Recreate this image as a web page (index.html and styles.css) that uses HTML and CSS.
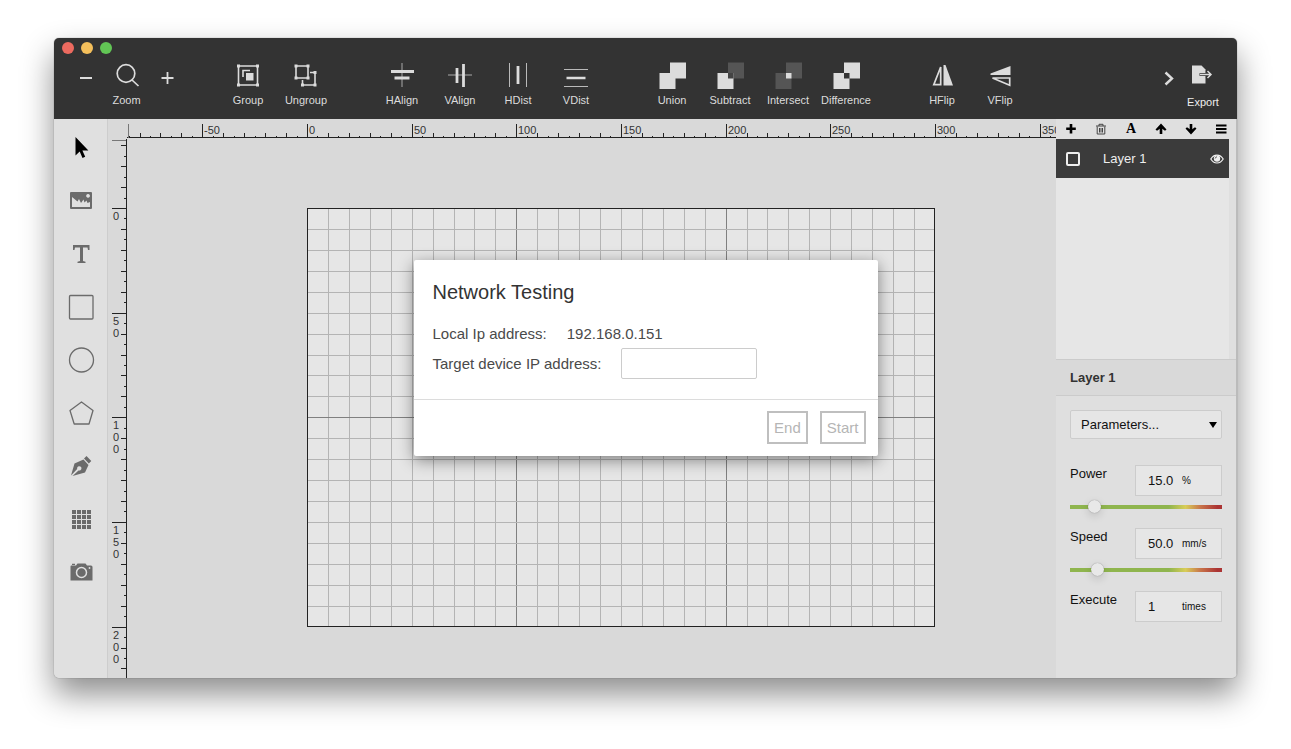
FILE: index.html
```html
<!DOCTYPE html>
<html lang="en">

<head>
    <meta charset="UTF-8">
    <meta name="viewport" content="width=device-width, initial-scale=1.0">
    <title>Network Testing</title>
    <link rel="stylesheet" href="styles.css">
</head>

<body>
    <div class="window">
        <header class="topbar">
            <div class="lights">
                <span class="light red"></span>
                <span class="light yellow"></span>
                <span class="light green"></span>
            </div>
            <div class="tools">
                <div class="tool-group">
                    <button class="tool step" aria-label="Zoom out"><svg viewBox="0 0 28 28"><path d="M8 17h12" stroke="currentColor" stroke-width="2"/></svg></button>
                    <button class="tool zoom"><svg viewBox="0 0 28 28" fill="none" stroke="currentColor" stroke-width="1.7"><circle cx="13" cy="12.500" r="8.800"/><path d="M19 19l6.500 6"/></svg>Zoom</button>
                    <button class="tool step" aria-label="Zoom in"><svg viewBox="0 0 28 28"><path d="M8.500 17h12M14.500 11v12" stroke="currentColor" stroke-width="1.800"/></svg></button>
                </div>
                <div class="tool-group">
                    <button class="tool"><svg viewBox="0 0 28 28"><path d="M4.500 5h19v19h-19z" fill="none" stroke="currentColor" stroke-width="1.600"/><path d="M3 3.500h3v3H3zM22 3.500h3v3h-3zM3 22.500h3v3H3zM22 22.500h3v3h-3zM12 12h7.500v7.500H12z" fill="currentColor"/><path d="M9 16V9.500h7" fill="none" stroke="currentColor" stroke-width="1.600"/></svg>Group</button>
                    <button class="tool"><svg viewBox="0 0 28 28"><path d="M4 5h12v12H4zM18 11.500h5V24H10.500v-5" fill="none" stroke="currentColor" stroke-width="1.600"/><path d="M2.500 3.500h3v3h-3zM14.500 3.500h3v3h-3zM2.500 15.500h3v3h-3zM14.500 15.500h3v3h-3zM21.500 10h3v3h-3zM21.500 22.500h3v3h-3zM9 22.500h3v3H9z" fill="currentColor"/></svg>Ungroup</button>
                </div>
                <div class="tool-group">
                    <button class="tool"><svg viewBox="0 0 28 28" stroke="currentColor"><path d="M14 2v24" stroke-opacity=".7"/><path d="M3 10.500h23M6.500 17h15" stroke-width="2.800"/></svg>HAlign</button>
                    <button class="tool"><svg viewBox="0 0 28 28" stroke="currentColor"><path d="M2 14h24" stroke-opacity=".7"/><path d="M11 7v15M17.500 3v23" stroke-width="2.800"/></svg>VAlign</button>
                    <button class="tool"><svg viewBox="0 0 28 28" stroke="currentColor"><path d="M5.500 2v24M22.500 2v24" stroke-opacity=".8"/><path d="M14 5v18" stroke-width="2.800"/></svg>HDist</button>
                    <button class="tool"><svg viewBox="0 0 28 28" stroke="currentColor"><path d="M2 8.500h24M2 25.500h24" stroke-opacity=".8"/><path d="M4.500 17h19" stroke-width="2.600"/></svg>VDist</button>
                </div>
                <div class="tool-group">
                    <button class="tool"><svg viewBox="0 0 28 28" fill="currentColor"><path d="M12 1.500h16v16H17.500V28h-16V12H12z"/></svg>Union</button>
                    <button class="tool"><svg viewBox="0 0 28 28"><path d="M12 1.500h16v16H12z" fill="#555"/><path d="M1.500 12h16v16h-16z" fill="currentColor"/><path d="M12 12h5.500v5.500H12z" fill="#444"/></svg>Subtract</button>
                    <button class="tool"><svg viewBox="0 0 28 28"><path d="M12 1.500h16v16H12zM1.500 12h16v16h-16z" fill="#555"/><path d="M12 12h5.500v5.500H12z" fill="currentColor"/></svg>Intersect</button>
                    <button class="tool"><svg viewBox="0 0 28 28" fill="currentColor"><path d="M12 1.500h16v16H17.500V12H12zM1.500 12H12v5.500h5.500V28h-16z"/></svg>Difference</button>
                </div>
                <div class="tool-group">
                    <button class="tool"><svg viewBox="0 0 28 28"><path d="M15.500 4v20.500H25L17.500 4z" fill="currentColor"/><path d="M12.700 6v17.700H5.800z" fill="none" stroke="currentColor" stroke-width="1.700"/></svg>HFlip</button>
                    <button class="tool"><svg viewBox="0 0 28 28"><path d="M24.500 5v9H4.500v-1.500z" fill="currentColor"/><path d="M23.700 17v7.300L6.500 17z" fill="none" stroke="currentColor" stroke-width="1.700"/></svg>VFlip</button>
                </div>
                <div class="tool-group export-group">
                    <button class="tool chevron" aria-label="More"><svg viewBox="0 0 10 28"><path d="M1.500 11.500l6.500 6-6.500 6" fill="none" stroke="currentColor" stroke-width="2.400"/></svg></button>
                    <button class="tool export"><svg viewBox="0 0 28 28"><path d="M3 4.500h9.500l4 4v14H3z" fill="#dcdcdc"/><path d="M10 13.500h7" stroke="#333"/><path d="M10.500 13.500H21M17.500 10l3.500 3.500-3.500 3.500" fill="none" stroke="#333" stroke-width="3"/><path d="M10.500 13.500H22M18.500 10l3.500 3.500-3.500 3.500" fill="none" stroke="#dcdcdc" stroke-width="1.500"/></svg>Export</button>
                </div>
            </div>
        </header>

        <main class="main">
            <nav class="sidebar">
                <button aria-label="Select"><svg viewBox="0 0 28 28"><path d="M8.500 3v18.500l4.200-4 2.800 6.500 2.700-1.200-2.800-6.300h6z" fill="#000"/></svg></button>
                <button aria-label="Image"><svg viewBox="0 0 28 28"><path d="M3 6a1 1 0 0 1 1-1h20a1 1 0 0 1 1 1v15a1 1 0 0 1-1 1H4a1 1 0 0 1-1-1zM5 10v10h18v-5l-2.500 1-1-2.500-2 2-1-3-2.500 3.500-2-4-1.500 2.500zM21 7a1.900 1.900 0 1 0 .1 0z" fill="currentColor" fill-rule="evenodd"/></svg></button>
                <button aria-label="Text"><svg viewBox="0 0 28 28"><path d="M6 5h16.500v5H21l-.5-2.500H16v13.500l2.500.7V23h-8v-1.300l2.500-.7V7.500H8L7.500 10H6z" fill="currentColor"/></svg></button>
                <button aria-label="Rectangle"><svg viewBox="0 0 28 28"><rect x="2.500" y="2.500" width="23.500" height="23.500" rx="1" fill="none" stroke="currentColor" stroke-width="1.300"/></svg></button>
                <button aria-label="Ellipse"><svg viewBox="0 0 28 28"><circle cx="14.500" cy="14" r="12" fill="none" stroke="currentColor" stroke-width="1.300"/></svg></button>
                <button aria-label="Polygon"><svg viewBox="0 0 28 28"><path d="M14.500 3L26 11.500 22 25H7.200L3 11.500z" fill="none" stroke="currentColor" stroke-width="1.300" stroke-linejoin="round"/></svg></button>
                <button aria-label="Pen"><svg viewBox="0 0 28 28"><path d="M4 23.500L7.500 11.500l9-4 5 5.500-3.500 7.500L5.500 24l6-5.600a2.200 2.200 0 1 0-1.300-1.300zM17 6.500L19.500 4l4.800 5-2.500 2.500z" fill="currentColor"/></svg></button>
                <button aria-label="Array"><svg viewBox="0 0 28 28"><path d="M5 5h4v4H5zM10 5h4v4h-4zM15 5h4v4h-4zM20 5h4v4h-4zM5 10h4v4H5zM10 10h4v4h-4zM15 10h4v4h-4zM20 10h4v4h-4zM5 15h4v4H5zM10 15h4v4h-4zM15 15h4v4h-4zM20 15h4v4h-4zM5 20h4v4H5zM10 20h4v4h-4zM15 20h4v4h-4zM20 20h4v4h-4z" fill="currentColor"/></svg></button>
                <button aria-label="Camera"><svg viewBox="0 0 28 28"><path d="M4 7.500h5l1.500-2h8l1.500 2h4A1.500 1.500 0 0 1 25.500 9v13.500H3.500V9A1.500 1.500 0 0 1 4 7.500z" fill="currentColor"/><circle cx="14.500" cy="14.500" r="5" fill="currentColor" stroke="#e0e0e0" stroke-width="1.500"/><path d="M5 5.700h3v1.200H5z" fill="currentColor"/><circle cx="22.500" cy="10" r=".9" fill="#e0e0e0"/></svg></button>
            </nav>

            <section class="workarea">
                <svg class="ruler-x" id="rulerX"></svg>
                <svg class="ruler-y" id="rulerY"></svg>
                <svg class="bed" id="bed"></svg>
            </section>

            <aside class="panel">
                <div class="layer-actions">
                    <button aria-label="Add layer"><svg viewBox="0 0 14 14"><path d="M7 2v9.500M2.200 6.800h9.600" stroke="currentColor" stroke-width="2.600"/></svg></button>
                    <button aria-label="Delete layer"><svg viewBox="0 0 14 14" fill="none" stroke="#444"><path d="M2 4h10M5 4V2.300h4V4M3.200 4.500V12h7.600V4.500M5.500 6v4.500M7 6v4.500M8.500 6v4.500"/></svg></button>
                    <button class="rename" aria-label="Rename layer">A</button>
                    <button aria-label="Move up"><svg viewBox="0 0 14 14"><path d="M7 12V4" stroke="currentColor" stroke-width="2.600"/><path d="M1.500 7.500L7 1.500l5.500 6-1.500 1.300L7 6 3 8.800z" fill="currentColor"/></svg></button>
                    <button aria-label="Move down"><svg viewBox="0 0 14 14"><path d="M7 2v8" stroke="currentColor" stroke-width="2.600"/><path d="M1.500 6.500l5.500 6 5.500-6L11 5.200 7 8 3 5.200z" fill="currentColor"/></svg></button>
                    <button aria-label="Menu"><svg viewBox="0 0 14 14"><path d="M2 3.500h10.500M2 7h10.500M2 10.500h10.500" stroke="currentColor" stroke-width="1.900"/></svg></button>
                </div>
                <div class="layer-list">
                    <div class="layer-row">
                        <input type="checkbox" id="layer1">
                        <label for="layer1">Layer 1</label>
                        <button aria-label="Toggle visibility"><svg viewBox="0 0 14 14"><path d="M.8 7c3-5.300 9.400-5.300 12.400 0-3 5.300-9.400 5.300-12.400 0z" fill="none" stroke="currentColor" stroke-width="1.200"/><circle cx="7" cy="6.600" r="3.200" fill="currentColor"/><path d="M5.200 6.500A1.900 1.900 0 0 1 7 4.800" fill="none" stroke="#3b3b3b" stroke-width=".8"/></svg></button>
                    </div>
                </div>
                <h2 class="panel-title">Layer 1</h2>
                <div class="params">
                    <div class="select-wrap">
                        <select aria-label="Parameters">
                            <option>Parameters...</option>
                        </select>
                    </div>
                    <div class="param">
                        <label for="power">Power</label>
                        <div class="field"><input type="text" id="power" value="15.0"><span>%</span></div>
                        <input type="range" min="0" max="100" value="13" aria-label="Power level">
                    </div>
                    <div class="param">
                        <label for="speed">Speed</label>
                        <div class="field"><input type="text" id="speed" value="50.0"><span>mm/s</span></div>
                        <input type="range" min="0" max="100" value="15" aria-label="Speed level">
                    </div>
                    <div class="param">
                        <label for="execute">Execute</label>
                        <div class="field"><input type="text" id="execute" value="1"><span>times</span></div>
                    </div>
                </div>
            </aside>
        </main>

        <div class="overlay">
            <div class="modal" role="dialog" aria-labelledby="modalTitle">
                <div class="modal-body">
                    <h1 id="modalTitle">Network Testing</h1>
                    <div class="modal-row">
                        <span>Local Ip address:</span>
                        <span>192.168.0.151</span>
                    </div>
                    <div class="modal-row">
                        <label for="target">Target device IP address:</label>
                        <input type="text" id="target">
                    </div>
                </div>
                <div class="modal-footer">
                    <button>End</button>
                    <button>Start</button>
                </div>
            </div>
        </div>
    </div>

    <script src="script.js"></script>
</body>

</html>
```
FILE: styles.css
```css
* {
    box-sizing: border-box;
}

body {
    font-family: "Liberation Sans", Arial, sans-serif;
    background: #fff;
    color: #222;
    display: flex;
    min-height: 100vh;
    margin: 0;
    padding: 38px 54px 71px;
}

button {
    background: none;
    border: none;
    padding: 0;
    color: inherit;
    font-family: inherit;
    cursor: pointer;
}

svg {
    display: block;
}

.window {
    position: relative;
    flex: 1;
    display: flex;
    flex-direction: column;
    border-radius: 5px;
    overflow: hidden;
    background: #d9d9d9;
    box-shadow: 0 0 1px rgba(0, 0, 0, 0.6), 0 16px 32px rgba(0, 0, 0, 0.45);
}

/* top toolbar */
.topbar {
    background: #333;
    color: #dcdcdc;
    height: 81px;
}

.lights {
    display: flex;
    gap: 7px;
    padding: 4px 8px 5px;
}

.light {
    width: 12px;
    height: 12px;
    border-radius: 50%;
}

.red {
    background: #ec6a5f;
}

.yellow {
    background: #f4bf5b;
}

.green {
    background: #62c655;
}

.tools {
    display: flex;
    gap: 38px;
    padding: 2px 5px 0 18px;
}

.tool-group {
    display: flex;
}

.tool {
    width: 58px;
    display: flex;
    flex-direction: column;
    align-items: center;
    gap: 4px;
    font-size: 11px;
    line-height: 14px;
}

.tool svg {
    width: 28px;
    height: 28px;
}

.step {
    width: 28px;
}

.zoom {
    width: 53px;
}

.export-group {
    margin-left: auto;
}

.tool.chevron,
.chevron svg {
    width: 10px;
}

.export {
    gap: 6px;
    color: #eee;
}

/* middle part */
.main {
    flex: 1;
    display: flex;
}

.sidebar {
    width: 54px;
    padding-top: 2px;
    background: #e0e0e0;
    border-right: 1px solid #cdcdcd;
    color: #6b6b6b;
}

.sidebar button {
    display: flex;
    align-items: center;
    justify-content: center;
    width: 100%;
    height: 53px;
}

.sidebar svg {
    width: 28px;
    height: 28px;
}

.workarea {
    flex: 1;
    min-width: 0;
    display: grid;
    grid-template-columns: 19px 1fr;
    grid-template-rows: 20px 1fr;
}

.workarea svg {
    width: 100%;
    height: 100%;
    font-size: 11px;
    fill: #333;
}

.ruler-x {
    grid-column: 2;
}

.ruler-y {
    grid-column: 1;
    grid-row: 2;
}

.bed {
    grid-column: 2;
    grid-row: 2;
}

/* right panel */
.panel {
    width: 181px;
    background: #dfdfdf;
    border-right: 1px solid #bbb;
    font-size: 13px;
    color: #111;
}

.layer-actions {
    display: flex;
    height: 20px;
}

.layer-actions button {
    flex: 1;
    display: flex;
    align-items: center;
    justify-content: center;
    color: #000;
}

.layer-actions svg,
.layer-row svg {
    width: 14px;
    height: 14px;
}

.layer-actions .rename {
    font: bold 14px "Liberation Serif", serif;
}

.layer-list {
    height: 220px;
    margin-right: 7px;
    background: #e6e6e6;
}

.layer-row {
    display: flex;
    align-items: center;
    height: 39px;
    padding: 0 5px 0 10px;
    background: #3b3b3b;
    color: #eee;
}

.layer-row input {
    appearance: none;
    width: 14px;
    height: 14px;
    margin: 0 23px 0 0;
    border: 2px solid #eee;
    border-radius: 2px;
}

.layer-row label {
    flex: 1;
}

.panel-title {
    margin: 0;
    padding: 0 14px;
    border: 1px solid #cbcbcb;
    border-width: 1px 0;
    background: #d9d9d9;
    font-size: 13px;
    line-height: 35px;
    color: #333;
}

.params {
    padding: 14px 14px 0;
}

.select-wrap {
    position: relative;
    margin-bottom: 26px;
}

.select-wrap::after {
    content: "";
    position: absolute;
    right: 5px;
    top: 12px;
    border: 4px solid transparent;
    border-top: 6px solid #000;
    border-bottom: none;
    pointer-events: none;
}

select {
    appearance: none;
    width: 100%;
    height: 29px;
    padding: 0 10px;
    border: 1px solid #ccc;
    border-radius: 2px;
    background: #e6e6e6;
    color: #111;
    font: 13px "Liberation Sans", Arial, sans-serif;
}

.param {
    display: flex;
    flex-wrap: wrap;
    justify-content: space-between;
    margin-bottom: 15px;
}

.param label {
    line-height: 17px;
}

.field {
    display: flex;
    align-items: center;
    width: 87px;
    height: 31px;
    padding-left: 12px;
    border: 1px solid #ccc;
    background: #e6e6e6;
}

.field input {
    width: 34px;
    padding: 0;
    border: none;
    background: none;
    color: #111;
    font: 13px "Liberation Sans", Arial, sans-serif;
}

.field span {
    font-size: 10px;
}

.param input[type="range"] {
    appearance: none;
    width: 100%;
    height: 13px;
    margin: 4px 0 0;
    background: linear-gradient(90deg, #8fb54e 65%, #d8cd58 76%, #c8744a 86%, #ab3434 97%) center / 100% 4px no-repeat;
}

.param input[type="range"]::-webkit-slider-thumb {
    appearance: none;
    width: 13px;
    height: 13px;
    border-radius: 50%;
    background: #e8e8e8;
    box-shadow: 0 0 1px rgba(0, 0, 0, 0.4), 0 3px 8px rgba(0, 0, 0, 0.15);
}

/* network dialog */
.overlay {
    position: absolute;
    inset: 0;
    display: flex;
    align-items: center;
    justify-content: center;
}

.modal {
    width: 464px;
    background: #fff;
    border-radius: 2px;
    box-shadow: 0 4px 16px rgba(0, 0, 0, 0.45);
    color: #4a4a4a;
    font-size: 15px;
}

.modal-body {
    padding: 20px 19px;
}

.modal h1 {
    margin: 0 0 15px;
    font-size: 20px;
    font-weight: normal;
    line-height: 24px;
    color: #333;
}

.modal-row {
    display: flex;
    align-items: center;
    gap: 20px;
    min-height: 29px;
}

.modal-row input {
    width: 136px;
    height: 31px;
    padding: 0 8px;
    border: 1px solid #ccc;
    border-radius: 2px;
    font-size: 15px;
}

.modal-footer {
    display: flex;
    justify-content: flex-end;
    gap: 12px;
    padding: 11px 12px 12px;
    border-top: 1px solid #dcdcdc;
}

.modal-footer button {
    height: 33px;
    padding: 0 5px;
    border: 2px solid #bfbfbf;
    color: #b5b5b5;
    font-size: 15px;
}
```
FILE: script.js
```js
const SCALE = 2.093; // px per mm
const ORIGIN_X = 180;
const ORIGIN_Y = 69;
const BED_W = 300;
const BED_H = 200;

const rulerX = document.getElementById("rulerX");
const rulerY = document.getElementById("rulerY");
const bed = document.getElementById("bed");

const posX = (mm) => Math.round(ORIGIN_X + mm * SCALE);
const posY = (mm) => Math.round(ORIGIN_Y + mm * SCALE);

const rect = (x, y, w, h, color) =>
    `<rect x="${x}" y="${y}" width="${w}" height="${h}" fill="${color}"/>`;

const tickSize = (mm) => {
    if (mm % 50 === 0) return 14;
    return mm % 10 === 0 ? 5 : 2;
};

const drawRulerX = () => {
    let out = rect(0, 18, "100%", 1, "#222") + rect(1, 5, 1, 14, "#777");
    for (let mm = -85; posX(mm) < rulerX.clientWidth; mm += 5) {
        const size = tickSize(mm);
        out += rect(posX(mm), 19 - size, 1, size, "#222");
        if (mm % 50 === 0) {
            out += `<text x="${posX(mm) + 2}" y="15">${mm}</text>`;
        }
    }
    rulerX.innerHTML = out;
};

const drawRulerY = () => {
    let out = rect(18, 0, 1, "100%", "#222") + rect(4, 1, 14, 1, "#777");
    for (let mm = -30; posY(mm) < rulerY.clientHeight; mm += 5) {
        const size = tickSize(mm);
        out += rect(18 - size, posY(mm), size, 1, "#222");
        if (mm % 50 === 0) {
            // one digit per line
            String(mm).split("").forEach((digit, i) => {
                out += `<text x="5" y="${posY(mm) + 12 + i * 12}">${digit}</text>`;
            });
        }
    }
    rulerY.innerHTML = out;
};

const drawBed = () => {
    const w = posX(BED_W) - ORIGIN_X - 1;
    const h = posY(BED_H) - ORIGIN_Y - 1;
    let out = rect(ORIGIN_X, ORIGIN_Y, w, h, "#e6e6e6");
    for (let mm = 10; mm < BED_W; mm += 10) {
        out += rect(posX(mm), ORIGIN_Y, 1, h, mm % 100 ? "#b4b4b4" : "#808080");
    }
    for (let mm = 10; mm < BED_H; mm += 10) {
        out += rect(ORIGIN_X, posY(mm), w, 1, mm % 100 ? "#b4b4b4" : "#808080");
    }
    out += `<rect x="${ORIGIN_X + 0.5}" y="${ORIGIN_Y + 0.5}" width="${w}" height="${h}" fill="none" stroke="#222"/>`;
    bed.innerHTML = out;
};

const draw = () => {
    drawRulerX();
    drawRulerY();
    drawBed();
};

window.addEventListener("resize", draw);
draw();
```
